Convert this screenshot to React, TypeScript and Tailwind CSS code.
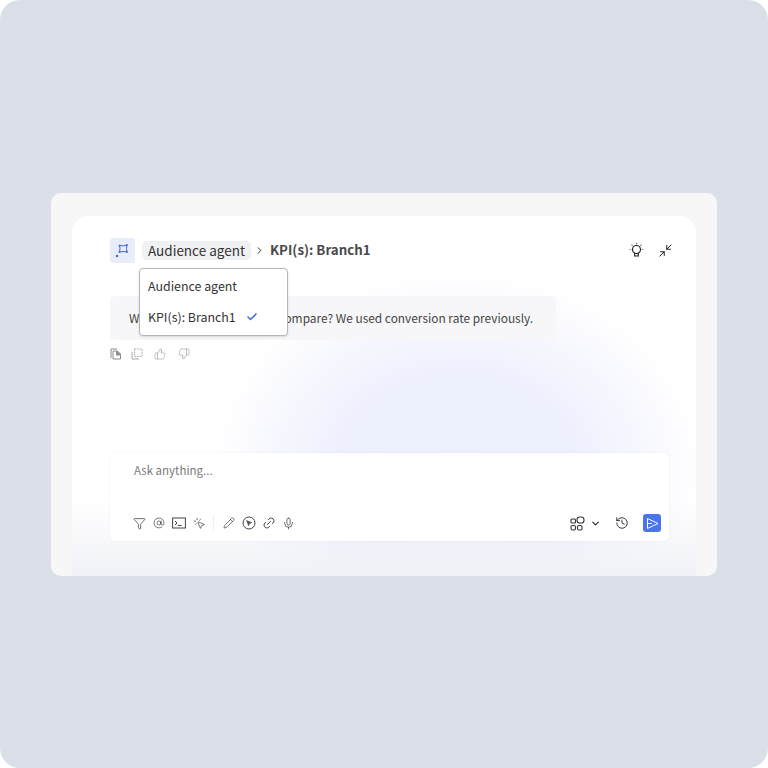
import React from "react";
import { Filter, AtSign, MousePointerClick, Pencil, Link2, Mic, ChevronDown, History, Minimize2, ThumbsUp, ThumbsDown, ChevronRight, Check } from "lucide-react";

function Send() {
  return (
    <svg width="13" height="13" viewBox="0 0 13 13" fill="none" stroke="#fff" strokeWidth="1" strokeLinejoin="round">
      <path d="M1.5 1.5 L12 6.5 L1.5 11.5 Z" />
      <path d="M1.5 6.5 H6" />
    </svg>
  );
}

function Apps() {
  return (
    <svg width="15" height="15" viewBox="0 0 15 15" fill="none" stroke="#333" strokeWidth="1.1">
      <rect x="1" y="3" width="4.5" height="4" rx="1" />
      <rect x="7" y="1" width="7" height="6" rx="2.8" />
      <rect x="1" y="9.5" width="4.5" height="4.5" rx="1.5" />
      <rect x="7.5" y="9.5" width="4.5" height="4.5" rx="1.5" />
    </svg>
  );
}

function Logo() {
  return (
    <svg width="15" height="15" viewBox="0 0 15 15" fill="none" stroke="#3f64d8" strokeWidth="1">
      <path d="M4.5 2.5 Q8 3.6 12 2 Q11 5.5 12 9 Q8 8 4.5 9 Q5.5 5.5 4.5 2.5 Z" />
      <rect x="3.7" y="1.7" width="1.6" height="1.6" fill="#3f64d8" stroke="none" />
      <rect x="11.2" y="1.2" width="1.6" height="1.6" fill="#3f64d8" stroke="none" />
      <rect x="11.2" y="8.2" width="1.6" height="1.6" fill="#3f64d8" stroke="none" />
      <rect x="3.7" y="8.2" width="1.6" height="1.6" fill="#3f64d8" stroke="none" />
      <circle cx="2" cy="13" r="1.2" fill="#3f64d8" stroke="none" />
    </svg>
  );
}

function PasteDoc() {
  return (
    <svg width="12" height="12" viewBox="0 0 12 12" fill="none" stroke="#8a8a8a" strokeWidth="1">
      <path d="M1 10 V1 H7" />
      <path d="M3 11 V3 H7.5 L10.5 6 V11 Z" />
      <path d="M6.5 3 V7 H10.5 Z" fill="#8a8a8a" />
    </svg>
  );
}

function CopyDashed() {
  return (
    <svg width="12" height="12" viewBox="0 0 12 12" fill="none" stroke="#a8a8a8" strokeWidth="1">
      <rect x="3.5" y="1" width="7.5" height="7.5" strokeDasharray="1.6 1" />
      <path d="M1 4 V11 H8" />
    </svg>
  );
}

function Bulb() {
  return (
    <svg width="17" height="17" viewBox="0 0 17 17" fill="none" stroke="#222" strokeWidth="1.2" strokeLinecap="round">
      <circle cx="8.5" cy="7.5" r="4" />
      <path d="M6.7 11 V14 H10.3 V11" />
      <path d="M8.5 1 V1.8 M2 7.5 H2.8 M14.2 7.5 H15 M3.8 3 L4.4 3.6 M13.2 3 L12.6 3.6" stroke="#888" />
    </svg>
  );
}

function Terminal() {
  return (
    <svg width="14" height="12" viewBox="0 0 14 12" fill="none" stroke="#444" strokeWidth="1">
      <rect x="0.6" y="1" width="12.8" height="10" />
      <path d="M3 4 L5 6 L3 8 M6 8.5 H9.5" />
    </svg>
  );
}

function CompassNeedle() {
  return (
    <svg width="14" height="14" viewBox="0 0 14 14" fill="none" stroke="#444" strokeWidth="1">
      <circle cx="7" cy="7" r="6" />
      <path d="M4.5 4.5 L9.8 6.6 L7.6 7.6 L6.6 9.8 Z" fill="#555" strokeWidth="0.5" />
    </svg>
  );
}

export default function App() {
  return (
    <div className="w-[768px] h-[768px] bg-white" style={{ fontFamily: '"Noto Sans CJK SC", "Noto Sans", sans-serif' }}>
      <div className="w-full h-full rounded-[20px] bg-[#dbdfe8] pt-[193px] px-[51px]">
        <div className="w-[666px] h-[383px] rounded-[10px] bg-[#f7f7f8] pt-[23px] px-[21px] overflow-hidden">
          <div className="relative w-[624px] h-[360px] rounded-t-[16px] overflow-hidden bg-[radial-gradient(ellipse_245px_200px_at_385px_255px,#eceffd_0%,#eef0fd_50%,#ffffff_100%)] px-[38px] pt-[22px]">
            <div className="absolute left-0 right-0 bottom-0 h-[75px] bg-gradient-to-b from-transparent to-[#f1f2f7]" />
            <div className="relative flex items-center h-[25px]">
              <div className="w-[25px] h-[25px] rounded-[3px] bg-[#e9ecf9] flex items-center justify-center">
                <Logo />
              </div>
              <div className="ml-[7px] h-[19px] px-[6px] rounded-[5px] bg-[#f0f1f3] flex items-center text-[13.5px] leading-[17px] pb-[1px] text-[#333]">Audience agent</div>
              <ChevronRight size={11} strokeWidth={2} color="#222" className="ml-[3px]" />
              <div className="ml-[5px] text-[13.3px] leading-[19px] mt-[-3px] font-bold text-[#4a4a4a]">KPI(s): Branch1</div>
              <div className="ml-auto flex items-center gap-[13px] mr-[-15px]">
                <Bulb />
                <Minimize2 size={15} strokeWidth={1.6} color="#222" />
              </div>
            </div>

            <div className="relative mt-[33px] w-[446px] h-[44px] rounded-[5px] bg-[#f7f7f9] flex items-center pl-[19px] text-[11.9px] text-[#444] whitespace-nowrap">
              What KPI would you like to compare? We used conversion rate previously.
            </div>
            <div className="absolute left-[67px] top-[52px] w-[149px] h-[68px] rounded-[4px] bg-white border border-[#b4b6ba] shadow-sm px-[8px] pt-[6px] text-[12.4px] text-[#333]">
              <div className="h-[22px] flex items-center">Audience agent</div>
              <div className="mt-[9px] h-[22px] flex items-center">
                <span>KPI(s): Branch1</span>
                <Check size={12} strokeWidth={3.2} color="#3f6ae0" className="ml-[10px]" />
              </div>
            </div>

            <div className="relative mt-[8px] flex items-center h-[12px]">
              <PasteDoc />
              <div className="ml-[9px]"><CopyDashed /></div>
              <ThumbsUp size={12} strokeWidth={1} color="#888" className="ml-[11px]" />
              <ThumbsDown size={12} strokeWidth={1} color="#888" className="ml-[12px]" />
            </div>

            <div className="relative mt-[93px] w-[559px] h-[88px] rounded-[5px] bg-white shadow-[0_0_2px_rgba(40,50,90,0.08)] px-[24px] pt-[8px]">
              <div className="text-[11.5px] text-[#7a7a7a] leading-[18px]">Ask anything...</div>
              <div className="mt-[34px] flex items-center h-[20px] ml-[-1px]">
                <Filter size={13} strokeWidth={1.3} color="#333" />
                <AtSign size={12} strokeWidth={1.3} color="#333" className="ml-[7px]" />
                <div className="ml-[7px]"><Terminal /></div>
                <MousePointerClick size={13} strokeWidth={1.2} color="#333" className="ml-[7px]" />
                <div className="ml-[7px] w-px h-[16px] bg-[#eceff2]" />
                <Pencil size={12} strokeWidth={1.3} color="#333" className="ml-[9px]" />
                <div className="ml-[7px]"><CompassNeedle /></div>
                <Link2 size={14} strokeWidth={1.4} color="#333" className="ml-[6px] -rotate-45" />
                <Mic size={13} strokeWidth={1.3} color="#333" className="ml-[6px]" />
                <div className="ml-auto flex items-center mr-[-16px]">
                  <Apps />
                  <ChevronDown size={11} strokeWidth={2.4} color="#222" className="ml-[5px]" />
                  <History size={14} strokeWidth={1.5} color="#222" className="ml-[14px]" />
                  <div className="ml-[14px] w-[18px] h-[18px] rounded-[3px] bg-[#4a74ee] flex items-center justify-center">
                    <Send />
                  </div>
                </div>
              </div>
            </div>
          </div>
        </div>
      </div>
    </div>
  );
}
